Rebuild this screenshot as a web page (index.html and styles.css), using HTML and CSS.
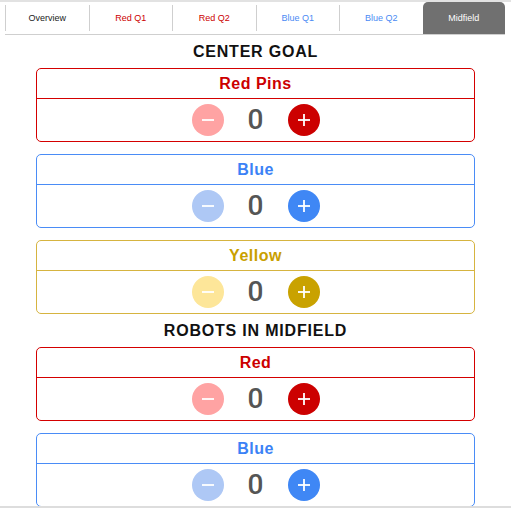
FILE: index.html
```html
<!DOCTYPE html>
<html lang="en">
<head>
    <meta charset="UTF-8">
    <meta name="viewport" content="width=device-width, initial-scale=1.0">
    <title>Midfield</title>
    <link rel="stylesheet" href="styles.css">
</head>
<body>

<div class="app">
    <!-- tabs -->
    <nav class="tabs">
        <div class="tab">Overview</div>
        <div class="tab red">Red Q1</div>
        <div class="tab red">Red Q2</div>
        <div class="tab blue">Blue Q1</div>
        <div class="tab blue">Blue Q2</div>
        <div class="tab active">Midfield</div>
    </nav>

    <main class="content">
        <h2 class="section-title">CENTER GOAL</h2>

        <div class="counter red">
            <div class="counter-title">Red Pins</div>
            <div class="counter-body">
                <button class="btn minus" onclick="change(this, -1)"><svg width="14" height="14" viewBox="0 0 14 14"><line x1="1" y1="7" x2="13" y2="7"/></svg></button>
                <span class="count">0</span>
                <button class="btn plus" onclick="change(this, 1)"><svg width="14" height="14" viewBox="0 0 14 14"><line x1="1" y1="7" x2="13" y2="7"/><line x1="7" y1="1" x2="7" y2="13"/></svg></button>
            </div>
        </div>

        <div class="counter blue">
            <div class="counter-title">Blue</div>
            <div class="counter-body">
                <button class="btn minus" onclick="change(this, -1)"><svg width="14" height="14" viewBox="0 0 14 14"><line x1="1" y1="7" x2="13" y2="7"/></svg></button>
                <span class="count">0</span>
                <button class="btn plus" onclick="change(this, 1)"><svg width="14" height="14" viewBox="0 0 14 14"><line x1="1" y1="7" x2="13" y2="7"/><line x1="7" y1="1" x2="7" y2="13"/></svg></button>
            </div>
        </div>

        <div class="counter yellow">
            <div class="counter-title">Yellow</div>
            <div class="counter-body">
                <button class="btn minus" onclick="change(this, -1)"><svg width="14" height="14" viewBox="0 0 14 14"><line x1="1" y1="7" x2="13" y2="7"/></svg></button>
                <span class="count">0</span>
                <button class="btn plus" onclick="change(this, 1)"><svg width="14" height="14" viewBox="0 0 14 14"><line x1="1" y1="7" x2="13" y2="7"/><line x1="7" y1="1" x2="7" y2="13"/></svg></button>
            </div>
        </div>

        <h2 class="section-title">ROBOTS IN MIDFIELD</h2>

        <div class="counter red">
            <div class="counter-title">Red</div>
            <div class="counter-body">
                <button class="btn minus" onclick="change(this, -1)"><svg width="14" height="14" viewBox="0 0 14 14"><line x1="1" y1="7" x2="13" y2="7"/></svg></button>
                <span class="count">0</span>
                <button class="btn plus" onclick="change(this, 1)"><svg width="14" height="14" viewBox="0 0 14 14"><line x1="1" y1="7" x2="13" y2="7"/><line x1="7" y1="1" x2="7" y2="13"/></svg></button>
            </div>
        </div>

        <div class="counter blue">
            <div class="counter-title">Blue</div>
            <div class="counter-body">
                <button class="btn minus" onclick="change(this, -1)"><svg width="14" height="14" viewBox="0 0 14 14"><line x1="1" y1="7" x2="13" y2="7"/></svg></button>
                <span class="count">0</span>
                <button class="btn plus" onclick="change(this, 1)"><svg width="14" height="14" viewBox="0 0 14 14"><line x1="1" y1="7" x2="13" y2="7"/><line x1="7" y1="1" x2="7" y2="13"/></svg></button>
            </div>
        </div>
    </main>
</div>

<script>
    // plus / minus buttons
    function change(btn, step) {
        var count = btn.parentNode.querySelector(".count");
        var value = parseInt(count.textContent, 10) + step;
        if (value < 0) value = 0;
        count.textContent = value;
    }
</script>

</body>
</html>
```

FILE: styles.css
```css
body {
    font-family: "Liberation Sans", Arial, sans-serif;
    margin: 0;
    padding: 0;
    background-color: #fff;
}

.app {
    height: 512px;
    box-sizing: border-box;
    border-top: 2px solid #e2e2e2;
    padding-bottom: 4px;
    display: flex;
    flex-direction: column;
}

/* tabs */
.tabs {
    display: flex;
    height: 32px;
    margin: 0 6px 0 5px;
    border-bottom: 1px solid #cfcfcf;
}

.tab {
    flex: 1;
    display: flex;
    align-items: center;
    justify-content: center;
    margin: 3px 0 3px;
    border-left: 1px solid #cfcfcf;
    font-size: 9px;
    color: #222;
}

.tab.red {
    color: #cc0000;
}

.tab.blue {
    color: #4a8af4;
}

.tab.active {
    margin: 0;
    border-left: none;
    border-radius: 5px 5px 0 0;
    background-color: #707070;
    color: #fff;
}

/* main area */
.content {
    flex: 1;
    overflow: hidden;
    border-bottom: 2px solid #dddddd;
}

.section-title {
    margin: 0;
    height: 33px;
    line-height: 33px;
    text-align: center;
    font-size: 16px;
    font-weight: bold;
    letter-spacing: 0.8px;
    color: #111;
}

.counter {
    width: 439px;
    box-sizing: border-box;
    margin: 0 auto;
    border: 1px solid;
    border-radius: 5px;
}

.counter + .counter {
    margin-top: 12px;
}

.counter-title {
    height: 29px;
    line-height: 30px;
    text-align: center;
    font-size: 16px;
    font-weight: bold;
    letter-spacing: 0.5px;
    border-bottom: 1px solid;
}

.counter-body {
    height: 42px;
    display: flex;
    align-items: center;
    justify-content: center;
    gap: 24px;
}

.count {
    font-family: Roboto, "Liberation Sans", sans-serif;
    font-size: 28px;
    font-weight: 500;
    line-height: 1;
    color: #555;
    width: 16px;
    text-align: center;
}

.btn {
    width: 32px;
    height: 32px;
    padding: 0;
    border: none;
    border-radius: 50%;
    display: flex;
    align-items: center;
    justify-content: center;
    cursor: pointer;
}

.btn svg {
    stroke: #fff;
    stroke-width: 1.8;
}

/* colours */
.counter.red {
    border-color: #d40000;
}

.counter.red .counter-title {
    color: #cc0000;
    border-color: #d40000;
}

.counter.red .minus {
    background-color: #ffa3a3;
}

.counter.red .plus {
    background-color: #cc0000;
}

.counter.blue {
    border-color: #4a8cf6;
}

.counter.blue .counter-title {
    color: #3b82f6;
    border-color: #4a8cf6;
}

.counter.blue .minus {
    background-color: #aec8f5;
}

.counter.blue .plus {
    background-color: #3f87f5;
}

.counter.yellow {
    border-color: #d6b440;
}

.counter.yellow .counter-title {
    color: #c9a000;
    border-color: #d6b440;
}

.counter.yellow .minus {
    background-color: #fde699;
}

.counter.yellow .plus {
    background-color: #c9a200;
}
```
